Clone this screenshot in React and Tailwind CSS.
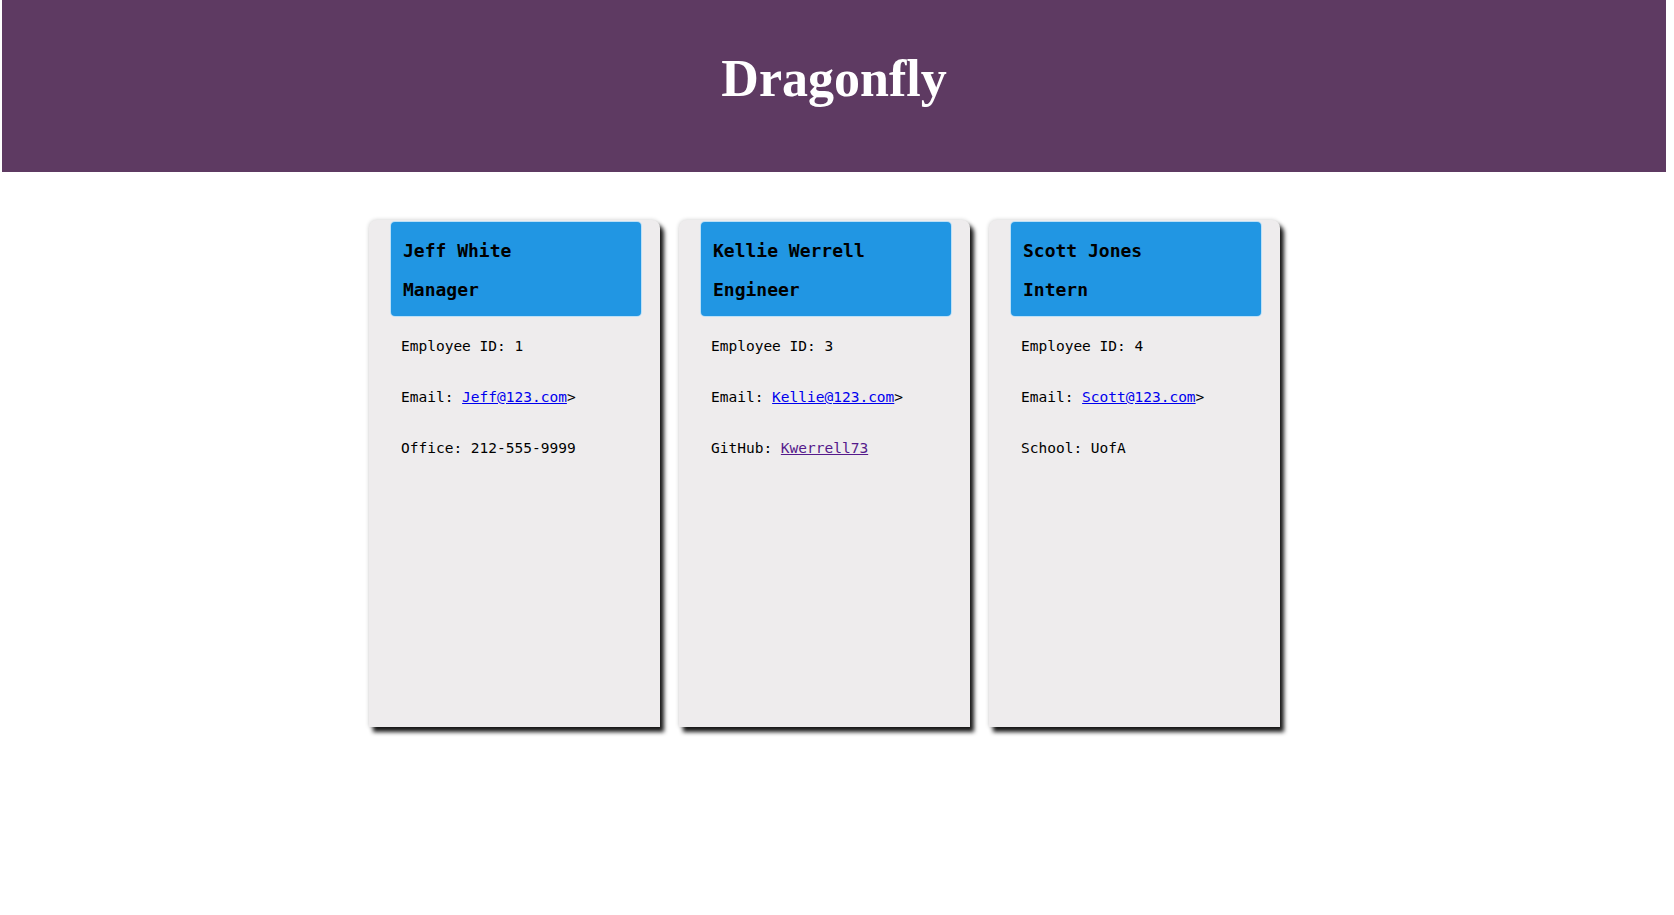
import React from 'react';

const employees = [
  {
    name: 'Jeff White',
    role: 'Manager',
    id: 1,
    email: 'Jeff@123.com',
    extra: { label: 'Office', value: '212-555-9999' },
  },
  {
    name: 'Kellie Werrell',
    role: 'Engineer',
    id: 3,
    email: 'Kellie@123.com',
    extra: { label: 'GitHub', value: 'Kwerrell73', link: true },
  },
  {
    name: 'Scott Jones',
    role: 'Intern',
    id: 4,
    email: 'Scott@123.com',
    extra: { label: 'School', value: 'UofA' },
  },
];

function EmployeeCard({ emp }) {
  return (
    <div className="w-[291px] h-[507px] bg-[#eeeced] rounded-t-lg shadow-[4px_5px_4px_rgba(0,0,0,0.9),0_0_4px_rgba(0,0,0,0.2)]">
      {/* card header */}
      <div className="mt-[1px] ml-[21px] w-[252px] bg-[#2196e3] border border-white/70 rounded-[5px] pl-[12px] pt-[17px] pb-[14px] flex flex-col gap-[15px] font-['DejaVu_Sans_Mono',monospace] text-[18px] leading-[24px] font-bold text-black">
        <h2>{emp.name}</h2>
        <h3>{emp.role}</h3>
      </div>

      {/* details */}
      <div className="mt-[21px] ml-[32px] flex flex-col gap-[34px] font-['DejaVu_Sans_Mono',monospace] text-[14.5px] leading-[17px] text-black">
        <p>Employee ID: {emp.id}</p>
        <p>
          Email: <a href="#" className="text-[#0000ee] underline">{emp.email}</a>&gt;
        </p>
        <p>
          {emp.extra.label}:{' '}
          {emp.extra.link ? (
            <a href="#" className="text-[#551a8b] underline">{emp.extra.value}</a>
          ) : (
            emp.extra.value
          )}
        </p>
      </div>
    </div>
  );
}

export default function App() {
  return (
    <div className="min-h-screen bg-white">
      {/* Header */}
      <header className="ml-[2px] w-[1664px] h-[172px] bg-[#5e3a62] pt-[50px] text-center">
        <h1 className="font-['Liberation_Serif','Times_New_Roman',serif] font-bold text-[52px] leading-[58px] text-white">
          Dragonfly
        </h1>
      </header>

      {/* Cards */}
      <div className="mt-[48px] pr-[25px] flex justify-center gap-[19px]">
        {employees.map((emp) => (
          <EmployeeCard key={emp.id} emp={emp} />
        ))}
      </div>
    </div>
  );
}
